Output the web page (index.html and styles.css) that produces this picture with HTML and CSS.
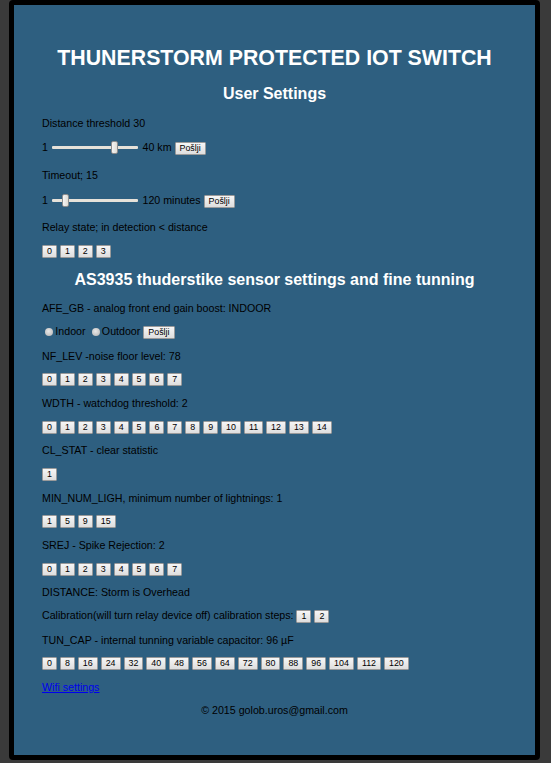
FILE: index.html
```html
<!DOCTYPE html>
<html>
<head>
<meta charset="utf-8">
<link rel="stylesheet" href="styles.css">
</head>
<body class="page">
<div class="box">
  <h1 class="title">THUNERSTORM PROTECTED IOT SWITCH</h1>
  <h2 class="sub">User Settings</h2>
  <p class="row">Distance threshold 30</p>
  <p class="row">1 <input class="range" type="range" min="1" max="40" value="30"> 40 km <button class="btn">Pošlji</button></p>
  <p class="row">Timeout; 15</p>
  <p class="row">1 <input class="range" type="range" min="1" max="120" value="15"> 120 minutes <button class="btn">Pošlji</button></p>
  <p class="row">Relay state; in detection &lt; distance</p>
  <p class="row"><button class="btn">0</button> <button class="btn">1</button> <button class="btn">2</button> <button class="btn">3</button></p>
  <h2 class="sub">AS3935 thuderstike sensor settings and fine tunning</h2>
  <p class="row">AFE_GB - analog front end gain boost: INDOOR</p>
  <p class="row"><input class="radio" type="radio" name="afe">Indoor <input class="radio" type="radio" name="afe">Outdoor <button class="btn">Pošlji</button></p>
  <p class="row">NF_LEV -noise floor level: 78</p>
  <p class="row"><button class="btn">0</button> <button class="btn">1</button> <button class="btn">2</button> <button class="btn">3</button> <button class="btn">4</button> <button class="btn">5</button> <button class="btn">6</button> <button class="btn">7</button></p>
  <p class="row">WDTH - watchdog threshold: 2</p>
  <p class="row"><button class="btn">0</button> <button class="btn">1</button> <button class="btn">2</button> <button class="btn">3</button> <button class="btn">4</button> <button class="btn">5</button> <button class="btn">6</button> <button class="btn">7</button> <button class="btn">8</button> <button class="btn">9</button> <button class="btn">10</button> <button class="btn">11</button> <button class="btn">12</button> <button class="btn">13</button> <button class="btn">14</button></p>
  <p class="row">CL_STAT - clear statistic</p>
  <p class="row"><button class="btn">1</button></p>
  <p class="row">MIN_NUM_LIGH, minimum number of lightnings: 1</p>
  <p class="row"><button class="btn">1</button> <button class="btn">5</button> <button class="btn">9</button> <button class="btn">15</button></p>
  <p class="row">SREJ - Spike Rejection: 2</p>
  <p class="row"><button class="btn">0</button> <button class="btn">1</button> <button class="btn">2</button> <button class="btn">3</button> <button class="btn">4</button> <button class="btn">5</button> <button class="btn">6</button> <button class="btn">7</button></p>
  <p class="row">DISTANCE: Storm is Overhead</p>
  <p class="row">Calibration(will turn relay device off) calibration steps: <button class="btn">1</button> <button class="btn">2</button></p>
  <p class="row">TUN_CAP - internal tunning variable capacitor: 96 µF</p>
  <p class="row"><button class="btn">0</button> <button class="btn">8</button> <button class="btn">16</button> <button class="btn">24</button> <button class="btn">32</button> <button class="btn">40</button> <button class="btn">48</button> <button class="btn">56</button> <button class="btn">64</button> <button class="btn">72</button> <button class="btn">80</button> <button class="btn">88</button> <button class="btn">96</button> <button class="btn">104</button> <button class="btn">112</button> <button class="btn">120</button></p>
  <p class="row"><a class="link" href="#">Wifi settings</a></p>
  <p class="row center">© 2015 golob.uros@gmail.com</p>
</div>
</body>
</html>
```

FILE: styles.css
```css
html, body {
  margin: 0;
  padding: 0;
}
.page {
  background: #3a3a3a;
  font-family: "Liberation Sans", Arial, sans-serif;
  font-size: 10.67px;
  color: #000;
}
.box {
  box-sizing: border-box;
  width: 531px;
  margin-left: 9px;
  border: 5px solid #000;
  border-radius: 4px;
  background: #2e5f80;
  padding: 26.67px 28px 28.5px;
}
.title {
  font-size: 21.33px;
  font-weight: bold;
  color: #fff;
  text-align: center;
  margin: 14.3px 0;
}
.sub {
  font-size: 16px;
  font-weight: bold;
  color: #fff;
  text-align: center;
  margin: 13.3px 0;
}
.row {
  margin: 10.67px 0;
  line-height: normal;
}
.center {
  text-align: center;
}
.link {
  color: #0000ee;
  text-decoration: underline;
}
.btn {
  box-sizing: border-box;
  font-family: "Liberation Sans", Arial, sans-serif;
  font-size: 8.9px;
  color: #000;
  height: 13px;
  line-height: 11px;
  padding: 0 4px;
  margin: 0;
  border: 1px solid #9a9a9a;
  border-radius: 1px;
  background: linear-gradient(#f6f6f6, #dedede);
  vertical-align: baseline;
}
.range {
  -webkit-appearance: none;
  appearance: none;
  width: 86px;
  height: 17px;
  margin: 0 1.33px 2px;
  padding: 0;
  background: transparent;
  vertical-align: -5px;
}
.range::-webkit-slider-runnable-track {
  height: 3px;
  background: #e6e2da;
  border-radius: 1px;
}
.range::-webkit-slider-thumb {
  -webkit-appearance: none;
  width: 7px;
  height: 13px;
  margin-top: -5px;
  box-sizing: border-box;
  border: 1px solid #8c8c8c;
  border-radius: 2px;
  background: linear-gradient(90deg, #f4f4f4, #e0ddd6);
}
.radio {
  -webkit-appearance: none;
  appearance: none;
  width: 8px;
  height: 8px;
  margin: 2px 2px 0 3.33px;
  border-radius: 50%;
  background: radial-gradient(circle at 45% 40%, #e8e8e8, #c8c8c8 60%, #a8a8a8);
  vertical-align: -0.5px;
}
```
